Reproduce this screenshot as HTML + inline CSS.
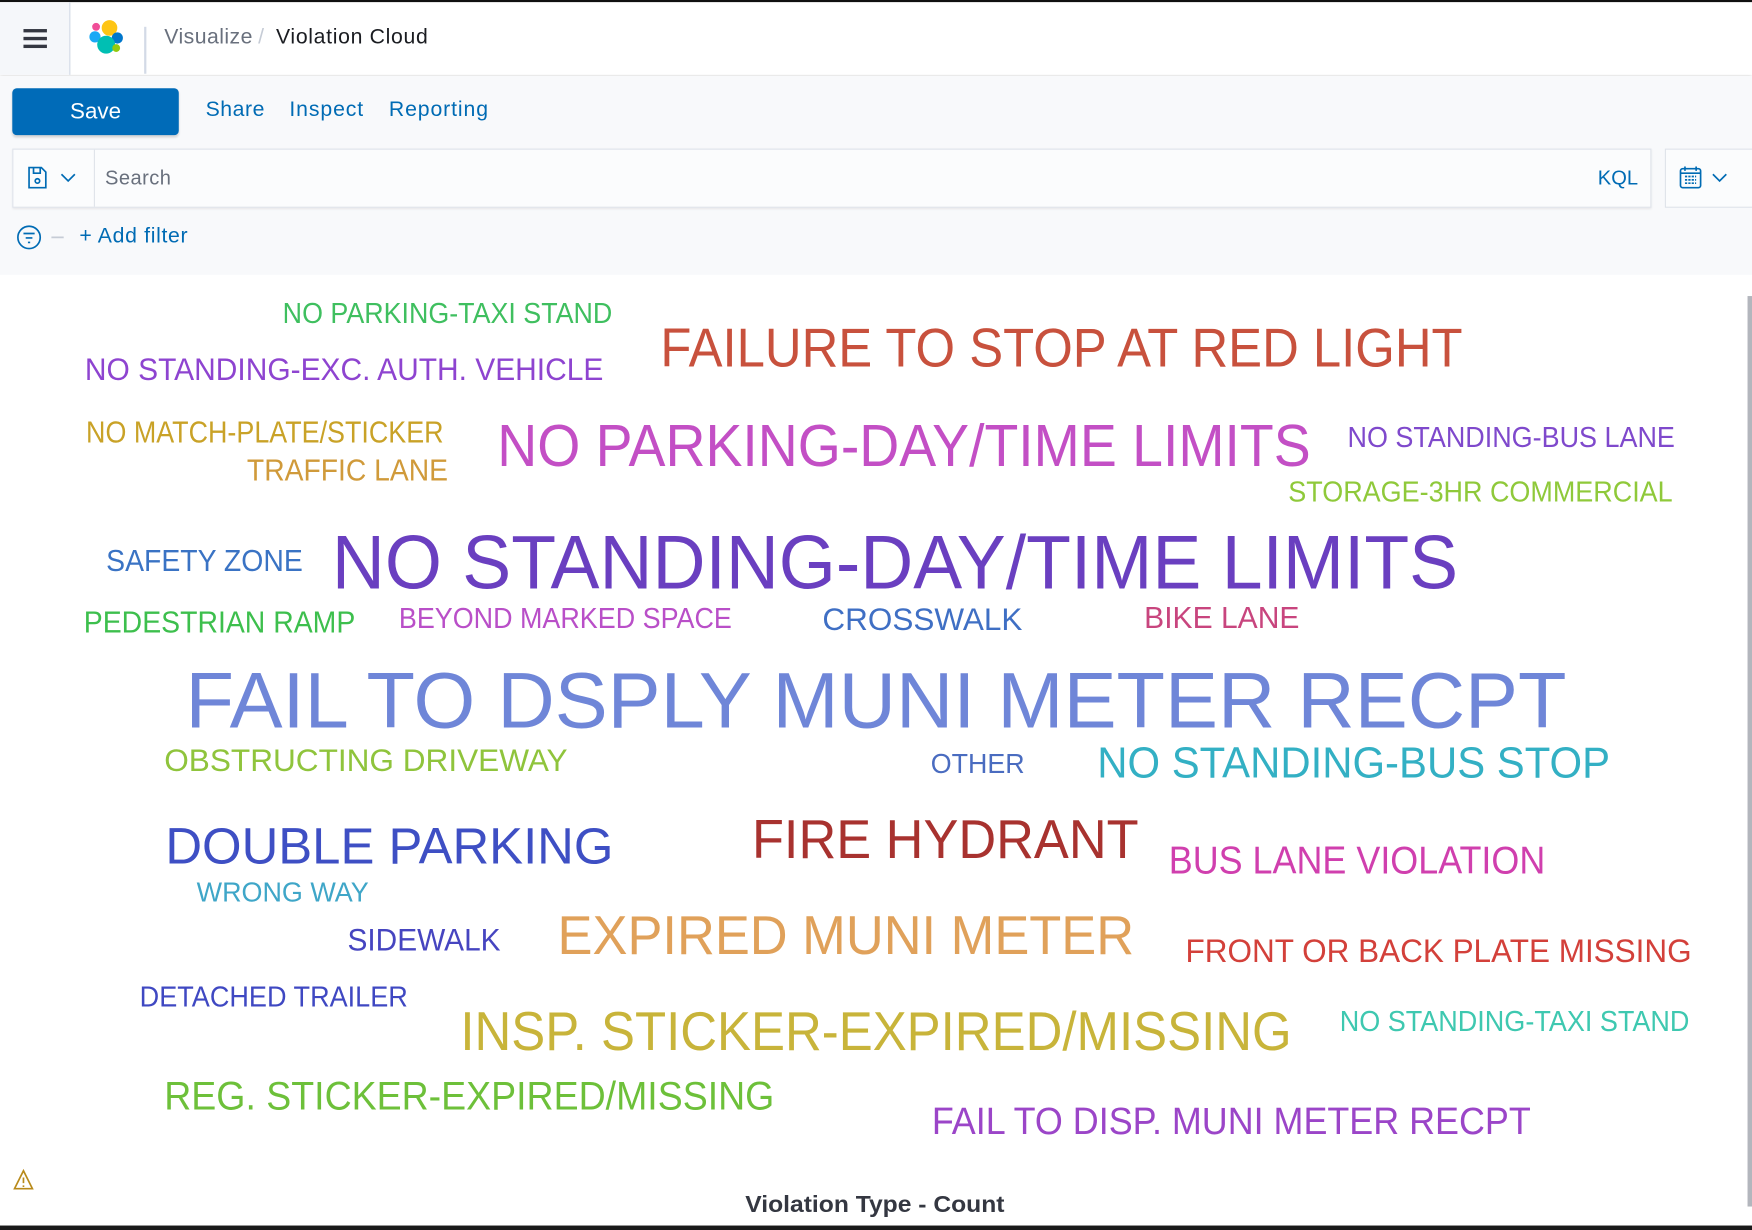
<!DOCTYPE html>
<html><head><meta charset="utf-8"><style>
html,body{margin:0;padding:0;width:1752px;height:1230px;overflow:hidden;background:#fff;font-family:"Liberation Sans",sans-serif}
#w{position:absolute;left:0;top:0;width:1568px;height:1101px;transform:scale(1.11735,1.11717);transform-origin:0 0;background:#fff}
.abs{position:absolute;white-space:nowrap}
.nav{font-size:19px;color:#006bb4;letter-spacing:0.5px;top:88px}
</style></head><body><div id="w">
<div class="abs" style="left:0;top:0;width:1568px;height:2px;background:#111"></div>
<div class="abs" style="left:0;top:2px;width:1568px;height:65px;background:#fff;box-shadow:0 2px 3px rgba(0,0,0,.12)"></div>
<div class="abs" style="left:0;top:2px;width:62px;height:65px;background:#f5f7fa;border-right:1px solid #d3dae6"></div>
<div class="abs" style="left:21px;top:26px;width:21px;height:3px;background:#343741"></div>
<div class="abs" style="left:21px;top:33px;width:21px;height:3px;background:#343741"></div>
<div class="abs" style="left:21px;top:40px;width:21px;height:3px;background:#343741"></div>
<svg class="abs" style="left:78px;top:16px" width="36" height="36" viewBox="0 0 36 36">
<circle cx="8" cy="8" r="3.5" fill="#f04e98"/><circle cx="20" cy="9" r="7" fill="#fec514"/>
<circle cx="7" cy="17" r="5" fill="#1ba9f5"/><circle cx="27" cy="18" r="5" fill="#0077cc"/>
<circle cx="17" cy="24" r="8" fill="#00bfb3"/><circle cx="26" cy="27" r="3.5" fill="#93c90e"/></svg>
<div class="abs" style="left:129px;top:24px;width:2px;height:42px;background:#d3dae6"></div>
<div class="abs" style="left:147px;top:23px;font-size:19px;letter-spacing:0.4px;color:#69707d">Visualize</div>
<div class="abs" style="left:231px;top:23px;font-size:19px;color:#c6ccd6">/</div>
<div class="abs" style="left:247px;top:23px;font-size:19px;letter-spacing:0.6px;color:#1a1c21">Violation Cloud</div>
<div class="abs" style="left:0;top:68px;width:1568px;height:178px;background:#f8f9fb"></div>
<div class="abs" style="left:11px;top:79px;width:149px;height:42px;background:#006bb8;border-radius:4px;box-shadow:0 2px 2px rgba(0,0,0,.15);color:#fff;font-size:20px;text-align:center;line-height:42px">Save</div>
<div class="abs nav" style="left:184px">Share</div>
<div class="abs nav" style="left:259px;letter-spacing:0.8px">Inspect</div>
<div class="abs nav" style="left:348px;letter-spacing:0.8px">Reporting</div>
<div class="abs" style="left:11px;top:133px;width:1465px;height:51px;border:1px solid #dfe3ea;background:#fbfcfd;box-shadow:0 1px 2px rgba(0,0,0,.08)"></div>
<div class="abs" style="left:84px;top:134px;width:1px;height:51px;background:#dfe3ea"></div>
<svg class="abs" style="left:24px;top:148px" width="50" height="22" viewBox="0 0 50 22"><path d="M2 2h11l4 4v14H2z M6 2v5h6V2" fill="none" stroke="#006bb4" stroke-width="1.5"/><circle cx="9.5" cy="14" r="2" fill="none" stroke="#006bb4" stroke-width="1.5"/><path d="M31 8l6 6 6-6" fill="none" stroke="#006bb4" stroke-width="1.5"/></svg>
<div class="abs" style="left:94px;top:149px;font-size:18px;letter-spacing:0.4px;color:#69707d">Search</div>
<div class="abs" style="left:1430px;top:149px;font-size:18px;color:#006bb4">KQL</div>
<div class="abs" style="left:1490px;top:133px;width:80px;height:51px;border:1px solid #dfe3ea;background:#fbfcfd"></div>
<svg class="abs" style="left:1503px;top:148px" width="50" height="24" viewBox="0 0 50 24"><rect x="1" y="3" width="18" height="17" rx="2" fill="none" stroke="#006bb4" stroke-width="1.5"/><path d="M1 7h18M5 1v4M15 1v4" stroke="#006bb4" stroke-width="1.5"/><path d="M5 10h10M5 13h10M5 16h10" stroke="#006bb4" stroke-width="1.5" stroke-dasharray="2 1"/><path d="M30 8l6 6 6-6" fill="none" stroke="#006bb4" stroke-width="1.5"/></svg>
<svg class="abs" style="left:15px;top:201px" width="50" height="24" viewBox="0 0 50 24"><circle cx="11" cy="11.5" r="10" fill="none" stroke="#006bb4" stroke-width="1.5"/><path d="M6 8h10M8 12h6M10 16h2" stroke="#006bb4" stroke-width="1.5"/><path d="M31 11.5h11" stroke="#c6ccd6" stroke-width="1.5"/></svg>
<div class="abs" style="left:71px;top:201px;font-size:19px;letter-spacing:0.6px;color:#006bb4">+ Add filter</div>
<div class="abs" style="left:1564px;top:265px;width:4px;height:815px;background:#b3b6bd"></div>
<svg class="abs" style="left:0;top:0" width="1568" height="1101" viewBox="0 0 1568 1101" font-family="Liberation Sans, sans-serif">
<text x="253" y="289" font-size="26" fill="#3fbf5f" textLength="295" lengthAdjust="spacingAndGlyphs">NO PARKING-TAXI STAND</text>
<text x="591" y="328" font-size="49" fill="#c8513d" textLength="718" lengthAdjust="spacingAndGlyphs">FAILURE TO STOP AT RED LIGHT</text>
<text x="76" y="340" font-size="28" fill="#8e44d0" textLength="464" lengthAdjust="spacingAndGlyphs">NO STANDING-EXC. AUTH. VEHICLE</text>
<text x="77" y="396" font-size="27" fill="#c9a227" textLength="320" lengthAdjust="spacingAndGlyphs">NO MATCH-PLATE/STICKER</text>
<text x="221" y="430" font-size="27" fill="#d09a3a" textLength="180" lengthAdjust="spacingAndGlyphs">TRAFFIC LANE</text>
<text x="445" y="417" font-size="53" fill="#c34fc5" textLength="728" lengthAdjust="spacingAndGlyphs">NO PARKING-DAY/TIME LIMITS</text>
<text x="1206" y="400" font-size="26" fill="#7f49cc" textLength="293" lengthAdjust="spacingAndGlyphs">NO STANDING-BUS LANE</text>
<text x="1153" y="449" font-size="26" fill="#8fc93a" textLength="344" lengthAdjust="spacingAndGlyphs">STORAGE-3HR COMMERCIAL</text>
<text x="95" y="511" font-size="27" fill="#3a73c4" textLength="176" lengthAdjust="spacingAndGlyphs">SAFETY ZONE</text>
<text x="297" y="527" font-size="68" fill="#6a3fc0" textLength="1008" lengthAdjust="spacingAndGlyphs">NO STANDING-DAY/TIME LIMITS</text>
<text x="75" y="566" font-size="27" fill="#3dbf4d" textLength="243" lengthAdjust="spacingAndGlyphs">PEDESTRIAN RAMP</text>
<text x="357" y="562" font-size="26" fill="#b94fc8" textLength="298" lengthAdjust="spacingAndGlyphs">BEYOND MARKED SPACE</text>
<text x="736" y="564" font-size="28" fill="#3f6fc4" textLength="179" lengthAdjust="spacingAndGlyphs">CROSSWALK</text>
<text x="1024" y="562" font-size="27" fill="#c8457e" textLength="139" lengthAdjust="spacingAndGlyphs">BIKE LANE</text>
<text x="166" y="651" font-size="71" fill="#6f86d8" textLength="1236" lengthAdjust="spacingAndGlyphs">FAIL TO DSPLY MUNI METER RECPT</text>
<text x="147" y="690" font-size="28" fill="#8fc43c" textLength="361" lengthAdjust="spacingAndGlyphs">OBSTRUCTING DRIVEWAY</text>
<text x="833" y="692" font-size="25" fill="#4a6cc0" textLength="84" lengthAdjust="spacingAndGlyphs">OTHER</text>
<text x="982" y="696" font-size="39" fill="#33b0c4" textLength="459" lengthAdjust="spacingAndGlyphs">NO STANDING-BUS STOP</text>
<text x="148" y="773" font-size="46" fill="#3e4fc4" textLength="401" lengthAdjust="spacingAndGlyphs">DOUBLE PARKING</text>
<text x="673" y="768" font-size="49" fill="#a8322f" textLength="346" lengthAdjust="spacingAndGlyphs">FIRE HYDRANT</text>
<text x="1046" y="782" font-size="35" fill="#d03fae" textLength="337" lengthAdjust="spacingAndGlyphs">BUS LANE VIOLATION</text>
<text x="176" y="807" font-size="25" fill="#3fa6c8" textLength="154" lengthAdjust="spacingAndGlyphs">WRONG WAY</text>
<text x="311" y="851" font-size="28" fill="#4645c0" textLength="137" lengthAdjust="spacingAndGlyphs">SIDEWALK</text>
<text x="499" y="854" font-size="49" fill="#e0a15a" textLength="516" lengthAdjust="spacingAndGlyphs">EXPIRED MUNI METER</text>
<text x="1061" y="861" font-size="29" fill="#d3403a" textLength="453" lengthAdjust="spacingAndGlyphs">FRONT OR BACK PLATE MISSING</text>
<text x="125" y="901" font-size="26" fill="#3f48c2" textLength="240" lengthAdjust="spacingAndGlyphs">DETACHED TRAILER</text>
<text x="412" y="940" font-size="49" fill="#c8b43a" textLength="744" lengthAdjust="spacingAndGlyphs">INSP. STICKER-EXPIRED/MISSING</text>
<text x="1199" y="923" font-size="26" fill="#3ec8b0" textLength="313" lengthAdjust="spacingAndGlyphs">NO STANDING-TAXI STAND</text>
<text x="147" y="993" font-size="36" fill="#6dc03a" textLength="546" lengthAdjust="spacingAndGlyphs">REG. STICKER-EXPIRED/MISSING</text>
<text x="834" y="1015" font-size="34" fill="#9b45c8" textLength="536" lengthAdjust="spacingAndGlyphs">FAIL TO DISP. MUNI METER RECPT</text>
<path d="M21 1048 L29 1064 L13 1064 Z" fill="none" stroke="#b88a1a" stroke-width="1.5"/><path d="M21 1054v5M21 1061v1.5" stroke="#b88a1a" stroke-width="1.5"/>
<text x="667" y="1085" font-size="21" font-weight="bold" fill="#343741" textLength="232" lengthAdjust="spacingAndGlyphs">Violation Type - Count</text>
</svg>
<div class="abs" style="left:0;top:1097px;width:1568px;height:4px;background:#1a1a1a"></div>
</div></body></html>
